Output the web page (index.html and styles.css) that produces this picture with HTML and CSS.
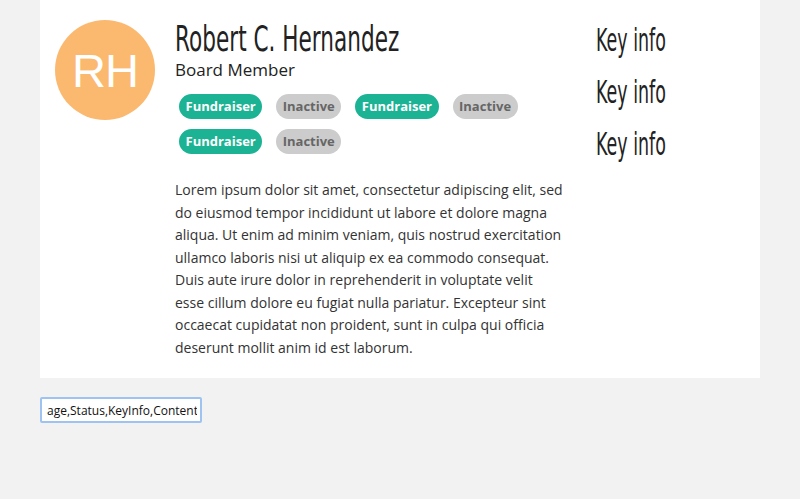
FILE: index.html
```html
<!DOCTYPE html>
<html>
<head>
<meta charset="utf-8">
<link rel="stylesheet" href="styles.css">
</head>
<body>
<div class="page">
  <div class="card">
    <div class="avatar">RH</div>
    <div class="main">
      <h1 class="name"><span class="narrow narrow-name">Robert C. Hernandez</span></h1>
      <div class="role">Board Member</div>
      <div class="tags">
        <span class="tag tag-green">Fundraiser</span>
        <span class="tag tag-gray">Inactive</span>
        <span class="tag tag-green">Fundraiser</span>
        <span class="tag tag-gray">Inactive</span>
        <span class="tag tag-green">Fundraiser</span>
        <span class="tag tag-gray">Inactive</span>
      </div>
      <p class="content">Lorem ipsum dolor sit amet, consectetur adipiscing elit, sed do eiusmod tempor incididunt ut labore et dolore magna aliqua. Ut enim ad minim veniam, quis nostrud exercitation ullamco laboris nisi ut aliquip ex ea commodo consequat. Duis aute irure dolor in reprehenderit in voluptate velit esse cillum dolore eu fugiat nulla pariatur. Excepteur sint occaecat cupidatat non proident, sunt in culpa qui officia deserunt mollit anim id est laborum.</p>
    </div>
    <div class="keyinfo">
      <div class="key"><span class="narrow narrow-key">Key info</span></div>
      <div class="key"><span class="narrow narrow-key">Key info</span></div>
      <div class="key"><span class="narrow narrow-key">Key info</span></div>
    </div>
  </div>
  <div class="controls">
    <input class="fields" type="text" value="age,Status,KeyInfo,Content">
  </div>
</div>
</body>
</html>
```

FILE: styles.css
```css
html, body {
  margin: 0;
  padding: 0;
  background: #f2f2f2;
}
body {
  font-family: "Open Sans", "Liberation Sans", sans-serif;
  color: #333;
}
.page {
  padding: 0 40px;
}
.card {
  background: #fff;
  height: 378px;
  box-sizing: border-box;
  display: flex;
  padding: 20px 0 0 15px;
}
.avatar {
  flex: none;
  width: 100px;
  height: 100px;
  border-radius: 50%;
  background: #fbb96f;
  color: #fff;
  font-family: "Liberation Sans", Arial, sans-serif;
  font-size: 47px;
  display: flex;
  align-items: center;
  justify-content: center;
  letter-spacing: -1px;
}
.main {
  flex: none;
  width: 390px;
  margin-left: 20px;
}
.narrow {
  display: inline-block;
  white-space: nowrap;
  vertical-align: top;
  font-family: "DejaVu Sans", sans-serif;
  transform-origin: 0 50%;
}
.narrow-name {
  transform: scaleX(0.6);
}
.narrow-key {
  transform: scaleX(0.545);
}
.name {
  margin: 0;
  height: 38px;
  font-weight: normal;
  font-size: 36px;
  line-height: 38px;
  color: #222;
}
.role {
  font-size: 17px;
  line-height: 24px;
  color: #222;
}
.tags {
  display: flex;
  flex-wrap: wrap;
  gap: 10px 14px;
  padding: 12px 0 0 4px;
}
.tag {
  display: inline-block;
  height: 25px;
  line-height: 25px;
  padding: 0 6.5px;
  border-radius: 13px;
  font-size: 13px;
  font-weight: bold;
}
.tag-green {
  background: #1bb394;
  color: #fff;
}
.tag-gray {
  background: #ccc;
  color: #666;
}
.content {
  margin: 25px 0 0;
  font-size: 14px;
  line-height: 22.5px;
}
.keyinfo {
  margin-left: 31px;
  margin-top: -6px;
}
.key {
  height: 52px;
  font-size: 32px;
  line-height: 52px;
  color: #222;
}
.controls {
  padding-top: 19px;
}
.fields {
  width: 162px;
  height: 26px;
  box-sizing: border-box;
  border: 2px solid #9ec3f0;
  border-radius: 2px;
  outline: none;
  padding: 0 3px 0 5px;
  font-family: "Open Sans", sans-serif;
  font-size: 12px;
  color: #111;
  margin: 0;
}
```
